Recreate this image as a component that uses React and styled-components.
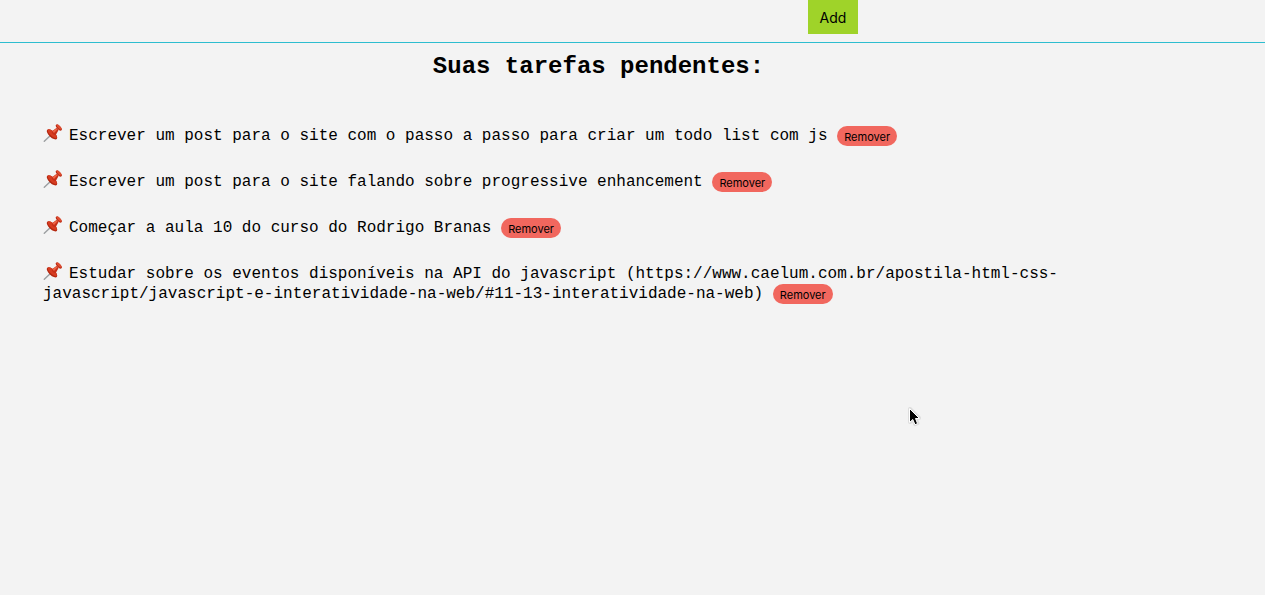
import React, { useState } from "react";
import styled, { createGlobalStyle } from "styled-components";

const GlobalStyle = createGlobalStyle`
  * { box-sizing: border-box; }
  body {
    margin: 0;
    background: #f3f3f3;
    color: #000;
    font: 16px/20px "Liberation Mono", "Courier New", monospace;
  }
`;

const Header = styled.header`
  display: flex;
  justify-content: flex-end;
  padding: 0 407px 8px 0;
  border-bottom: 1px solid #2dbdcf;
`;

const AddButton = styled.button`
  width: 50px;
  height: 34px;
  padding: 2px 0 0;
  border: 0;
  background: #9fd329;
  color: #000;
  font: 400 14px/20px Inter, "Liberation Sans", sans-serif;
  cursor: pointer;
`;

const Main = styled.main`
  padding: 9px 111px 24px 43px;
`;

const Title = styled.h1`
  margin: 0 0 44px;
  font-size: 24px;
  line-height: 30px;
  text-align: center;
`;

const TaskList = styled.ul`
  display: flex;
  flex-direction: column;
  gap: 26px;
  margin: 0;
  padding: 0;
  list-style: none;
`;

const Task = styled.li`
  line-height: 20px;
`;

const PinIcon = styled.svg`
  width: 19px;
  height: 18px;
  margin: -4px 7px 0 0;
  vertical-align: -2px;
`;

const RemoveButton = styled.button`
  width: 60px;
  height: 20px;
  padding: 2px 0 0;
  border: 0;
  border-radius: 10px;
  background: #f1675e;
  color: #000;
  font: 400 11px/18px Inter, "Liberation Sans", sans-serif;
  vertical-align: top;
  cursor: pointer;
`;

const Pointer = styled.svg`
  position: absolute;
  left: 907px;
  top: 406px;
  width: 14px;
  height: 22px;
  pointer-events: none;
`;

function Pin() {
  return (
    <PinIcon viewBox="0 0 19 18" aria-hidden="true">
      <path d="M1.3 17.3 8.500 10.400" stroke="#9b9ea0" strokeWidth="1.400" strokeLinecap="round" />
      <ellipse cx="9" cy="10.300" rx="6.700" ry="3" transform="rotate(44 9 10.300)" fill="#b3270f" />
      <ellipse cx="9.300" cy="9.700" rx="6" ry="2.300" transform="rotate(44 9.300 9.700)" fill="#d63c21" />
      <path d="m8.700 7.400 5-3.600 2 2-2.900 5.200c-1.800.6-4.100-1.600-4.100-3.600z" fill="#c62f17" />
      <path d="m9.500 7.300 4.200-3 .9.900-3.600 3.700z" fill="#ee6446" />
      <ellipse cx="15.800" cy="3.500" rx="3.900" ry="1.800" transform="rotate(46 15.800 3.500)" fill="#b92a12" />
      <ellipse cx="16.100" cy="3.100" rx="3.200" ry="1.200" transform="rotate(46 16.100 3.100)" fill="#e04d31" />
    </PinIcon>
  );
}

const initialTasks = [
  "Escrever um post para o site com o passo a passo para criar um todo list com js",
  "Escrever um post para o site falando sobre progressive enhancement",
  "Começar a aula 10 do curso do Rodrigo Branas",
  "Estudar sobre os eventos disponíveis na API do javascript (https://www.caelum.com.br/apostila-html-css-javascript/javascript-e-interatividade-na-web/#11-13-interatividade-na-web)",
];

export default function App() {
  const [tasks, setTasks] = useState(initialTasks);
  return (
    <>
      <GlobalStyle />
      <Header>
        <AddButton type="button">Add</AddButton>
      </Header>
      <Main>
        <Title>Suas tarefas pendentes:</Title>
        <TaskList>
          {tasks.map((task) => (
            <Task key={task}>
              <Pin />
              {task}{" "}
              <RemoveButton
                type="button"
                onClick={() => setTasks(tasks.filter((t) => t !== task))}
              >
                Remover
              </RemoveButton>
            </Task>
          ))}
        </TaskList>
      </Main>
      <Pointer viewBox="0 0 14 22" aria-hidden="true">
        <path
          d="M3 3v13l3-3 2.200 5.200 2.200-1L8.300 12H12z"
          fill="#000"
          stroke="#c4c4c4"
          strokeWidth="4"
          strokeLinejoin="round"
          opacity=".45"
        />
        <path
          d="M2.500 2.500v14l3.300-3 2.200 5.200 2.600-1.100L8.500 12.500H12.500z"
          fill="#000"
          stroke="#fff"
          strokeWidth="1"
          strokeLinejoin="round"
        />
      </Pointer>
    </>
  );
}
